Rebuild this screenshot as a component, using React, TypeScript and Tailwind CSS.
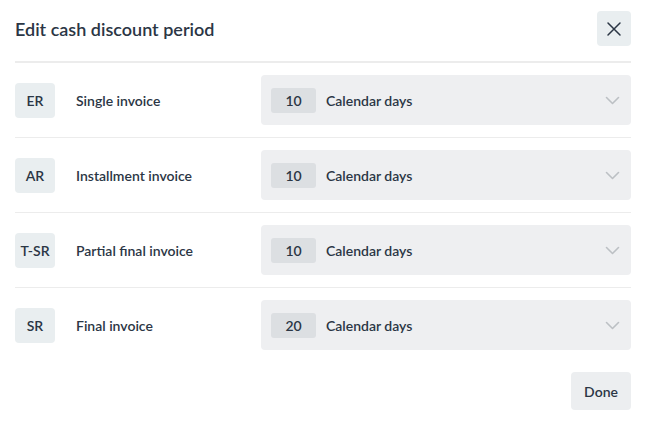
import React from "react";

const rows = [
  { code: "ER", label: "Single invoice", days: 10 },
  { code: "AR", label: "Installment invoice", days: 10 },
  { code: "T-SR", label: "Partial final invoice", days: 10 },
  { code: "SR", label: "Final invoice", days: 20 },
];

const ChevronDown = () => (
  <svg width="15" height="9" viewBox="0 0 15 9" fill="none">
    <path d="M1.5 1.5 7.5 7.5l6-6" stroke="#bcc0c4" strokeWidth="1.6" strokeLinecap="round" strokeLinejoin="round" />
  </svg>
);

export default function App() {
  return (
    <div
      className="w-[646px] h-[424px] bg-white px-[15px] text-[#2b3645]"
      style={{ fontFamily: "Lato, 'Noto Sans', sans-serif" }}
    >
      {/* Header */}
      <div className="flex items-center justify-between pt-[11px] pb-[15px] border-b-2 border-[#ececec]">
        <h1 className="text-[18px] font-semibold leading-none">Edit cash discount period</h1>
        <button className="w-[34px] h-[35px] rounded-[4px] bg-[#e9eef0] flex items-center justify-center">
          <svg width="16" height="16" viewBox="0 0 16 16" fill="none">
            <path d="M2 2l12 12M14 2 2 14" stroke="#2b3645" strokeWidth="1.5" strokeLinecap="round" />
          </svg>
        </button>
      </div>

      {/* Rows */}
      <div>
        {rows.map((row, i) => (
          <div
            key={row.code}
            className={`flex items-center py-3 ${i < rows.length - 1 ? "border-b border-[#ececec]" : ""}`}
          >
            <div className="w-[40px] h-[35px] rounded-[4px] bg-[#e9eef0] flex items-center justify-center text-[14px] font-semibold">
              {row.code}
            </div>
            <div className="w-[206px] pl-[21px] text-[14px] font-semibold">{row.label}</div>
            <div className="flex-1 h-[50px] rounded-[4px] bg-[#eeeff1] flex items-center pl-[10px] pr-[11px]">
              <div className="w-[45px] h-[25px] rounded-[3px] bg-[#dcdfe2] flex items-center justify-center text-[14px] font-semibold">
                {row.days}
              </div>
              <div className="ml-[10px] text-[14px] font-semibold flex-1">Calendar days</div>
              <ChevronDown />
            </div>
          </div>
        ))}
      </div>

      {/* Footer */}
      <div className="flex justify-end mt-[10px]">
        <button className="w-[60px] h-[38px] rounded-[4px] bg-[#eceef0] text-[14px] font-semibold text-[#2b3645]">
          Done
        </button>
      </div>
    </div>
  );
}
